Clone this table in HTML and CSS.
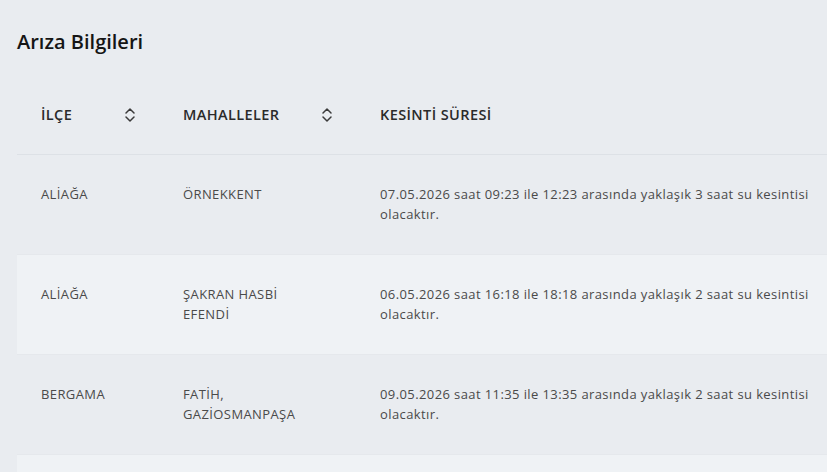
FILE: index.html
```html
<!DOCTYPE html>
<html lang="tr">
<head>
<meta charset="utf-8">
<title>Arıza Bilgileri</title>
<link rel="stylesheet" href="styles.css">
</head>
<body>
<div class="page">
  <h2 class="title">Arıza Bilgileri</h2>
  <table class="tbl">
    <thead>
      <tr>
        <th class="c1"><span class="th-in">İLÇE <svg class="sort" viewBox="0 0 12 18" width="12" height="18"><path d="M2 7 L6 3 L10 7 M2 11 L6 15 L10 11" fill="none" stroke="#3a3a3a" stroke-width="1.5" stroke-linecap="round" stroke-linejoin="round"/></svg></span></th>
        <th class="c2"><span class="th-in">MAHALLELER <svg class="sort" viewBox="0 0 12 18" width="12" height="18"><path d="M2 7 L6 3 L10 7 M2 11 L6 15 L10 11" fill="none" stroke="#3a3a3a" stroke-width="1.5" stroke-linecap="round" stroke-linejoin="round"/></svg></span></th>
        <th class="c3">KESİNTİ SÜRESİ</th>
      </tr>
    </thead>
    <tbody>
      <tr>
        <td>ALİAĞA</td>
        <td>ÖRNEKKENT</td>
        <td>07.05.2026 saat 09:23 ile 12:23 arasında yaklaşık 3 saat su kesintisi olacaktır.</td>
      </tr>
      <tr class="alt">
        <td>ALİAĞA</td>
        <td>ŞAKRAN HASBİ EFENDİ</td>
        <td>06.05.2026 saat 16:18 ile 18:18 arasında yaklaşık 2 saat su kesintisi olacaktır.</td>
      </tr>
      <tr>
        <td>BERGAMA</td>
        <td>FATİH, GAZİOSMANPAŞA</td>
        <td>09.05.2026 saat 11:35 ile 13:35 arasında yaklaşık 2 saat su kesintisi olacaktır.</td>
      </tr>
      <tr class="alt">
        <td></td>
        <td></td>
        <td></td>
      </tr>
    </tbody>
  </table>
</div>
</body>
</html>
```
FILE: styles.css
```css
html, body {
  margin: 0;
  padding: 0;
  background: #e9ecf0;
  overflow: hidden;
  height: 472px;
}
.page {
  padding: 0 0 0 17px;
  font-family: "Open Sans", "Noto Sans", sans-serif;
  color: #444;
}
.title {
  margin: 0;
  padding-top: 30px;
  font-size: 20px;
  line-height: 24px;
  font-weight: 600;
  color: #151515;
}
.tbl {
  margin-top: 21px;
  border-collapse: collapse;
  table-layout: fixed;
  width: 830px;
}
.tbl th {
  text-align: left;
  font-size: 14.5px;
  font-weight: 600;
  color: #2a2a2a;
  height: 79px;
  padding: 0 23px 0 24px;
  border-bottom: 1px solid #dde1e6;
  vertical-align: middle;
  letter-spacing: 0.4px;
}
.th-in {
  display: flex;
  align-items: center;
  justify-content: space-between;
}
.sort {
  display: block;
}
.c1 { width: 95px; }
.c2 { width: 150px; }
.c3 { width: 490px; }
.tbl td {
  padding: 30px 24px;
  font-size: 13px;
  line-height: 19.5px;
  color: #4a4a4a;
  vertical-align: top;
  border-bottom: 1px solid #e5e8ec;
  letter-spacing: 0.4px;
}
.tbl td:nth-child(2) {
  padding-right: 38px;
}
.tbl td:nth-child(3) {
  padding-right: 75px;
}
.tbl tr.alt td {
  background: #eff2f5;
}
```
